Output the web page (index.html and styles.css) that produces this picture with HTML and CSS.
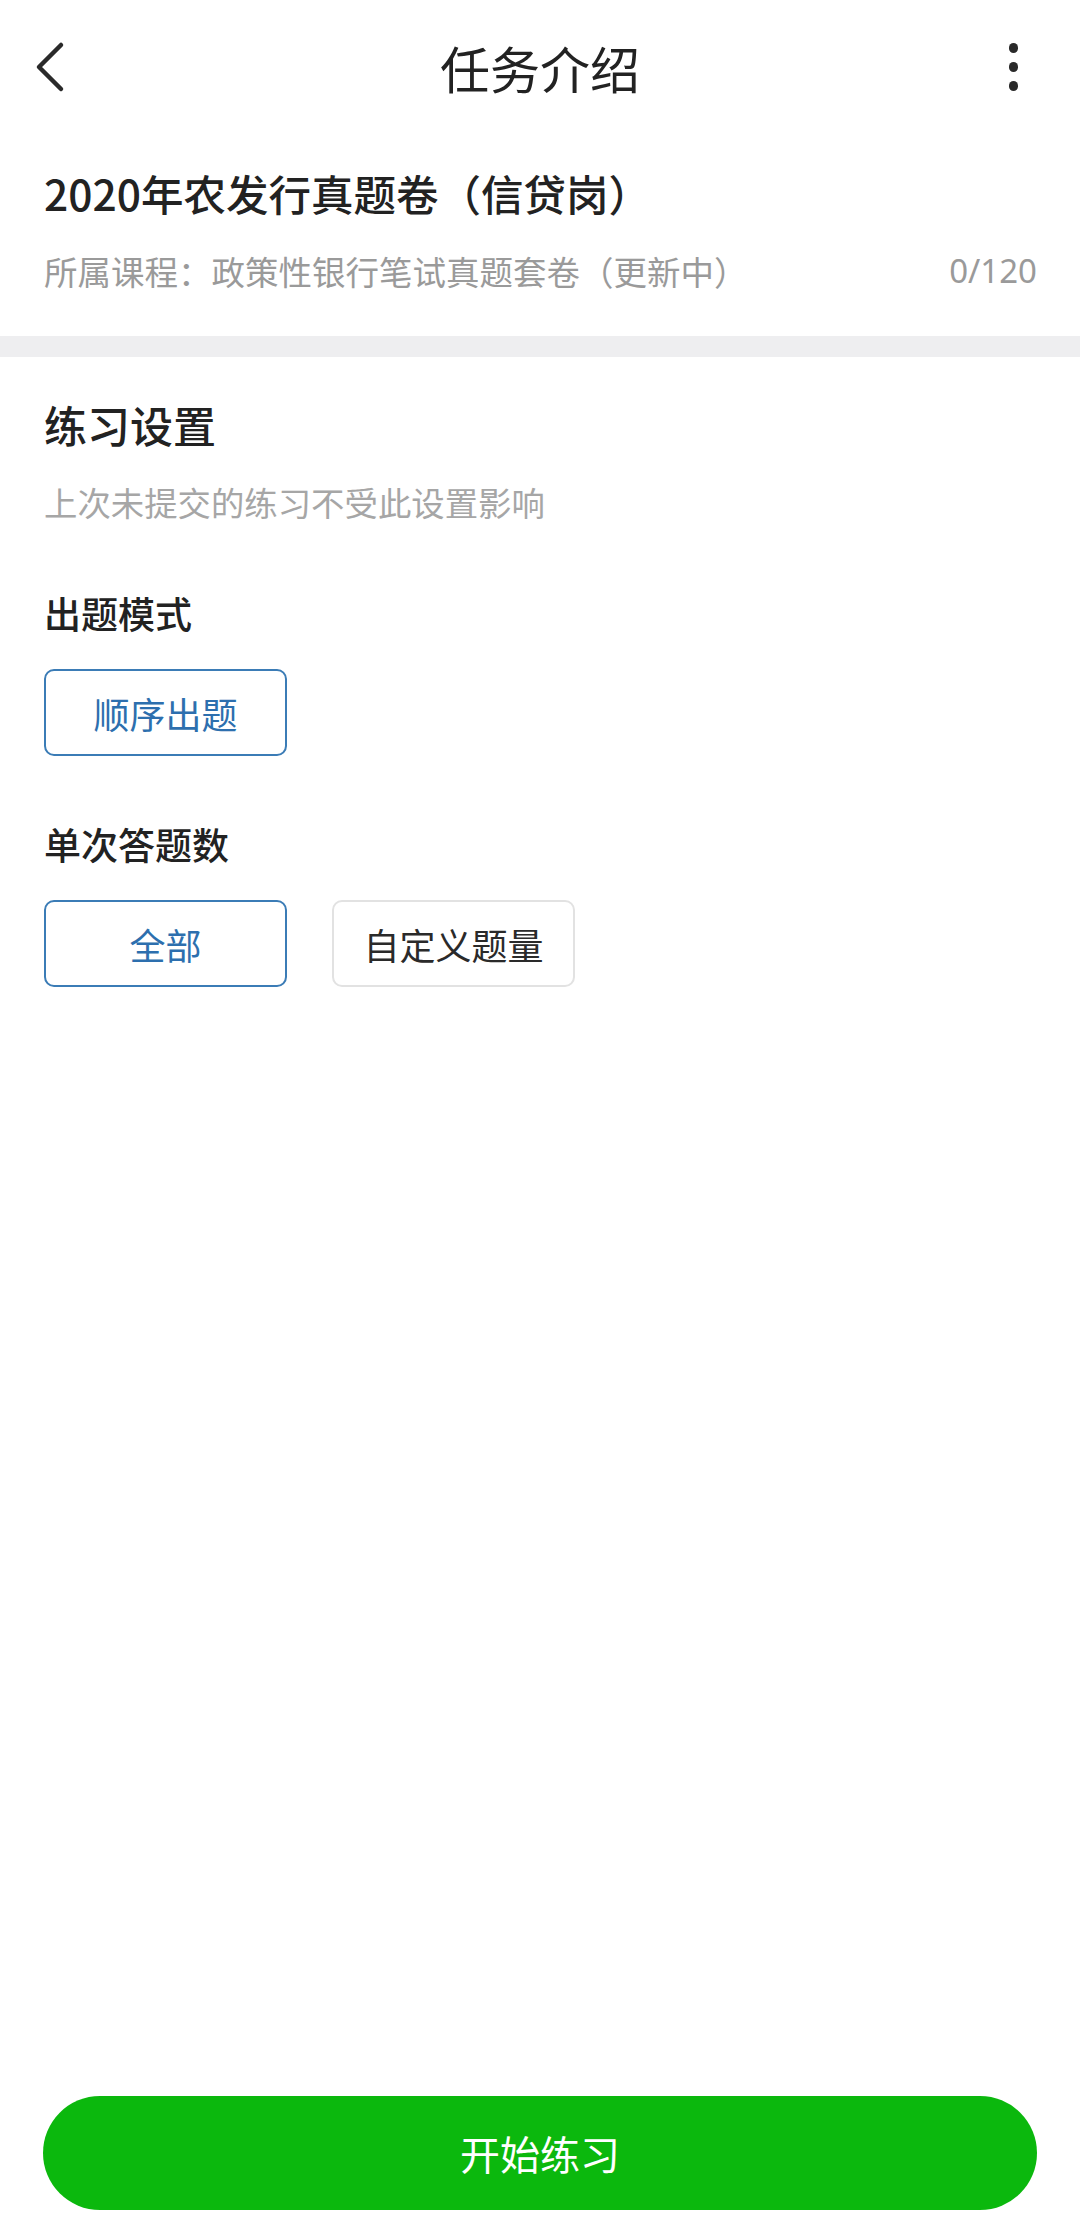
FILE: index.html
```html
<!DOCTYPE html>
<html lang="zh-CN">
<head>
<meta charset="utf-8">
<title>任务介绍</title>
<link rel="stylesheet" href="styles.css">
</head>
<body>
<div class="page">
  <header class="topbar">
    <svg class="back" width="40" height="60" viewBox="0 0 40 60">
      <polyline points="26,8 4,30 26,52" fill="none" stroke="#2a2a2a" stroke-width="4.5" stroke-linecap="round" stroke-linejoin="round"/>
    </svg>
    <h1 class="topbar-title">任务介绍</h1>
    <div class="more">
      <span class="dot"></span><span class="dot"></span><span class="dot"></span>
    </div>
  </header>

  <section class="info">
    <h2 class="info-title">2020年农发行真题卷（信贷岗）</h2>
    <div class="info-sub">
      <span>所属课程：政策性银行笔试真题套卷（更新中）</span>
      <span class="count">0/120</span>
    </div>
  </section>

  <div class="divider"></div>

  <section class="settings">
    <h3 class="settings-title">练习设置</h3>
    <p class="hint">上次未提交的练习不受此设置影响</p>

    <div class="group-label">出题模式</div>
    <div class="options">
      <button class="opt active">顺序出题</button>
    </div>

    <div class="group-label">单次答题数</div>
    <div class="options">
      <button class="opt active">全部</button>
      <button class="opt">自定义题量</button>
    </div>
  </section>

  <footer class="footer">
    <button class="start">开始练习</button>
  </footer>
</div>
</body>
</html>
```

FILE: styles.css
```css
* { box-sizing: border-box; }
html, body {
  margin: 0;
  padding: 0;
  background: #ffffff;
}
body {
  font-family: "Noto Sans CJK SC", "Noto Sans", sans-serif;
  color: #222222;
}
.page {
  width: 1080px;
  height: 2225px;
  display: flex;
  flex-direction: column;
}
.topbar {
  height: 134px;
  display: flex;
  align-items: center;
  justify-content: space-between;
  padding: 0 62px 0 35px;
  position: relative;
}
.back { display: block; }
.topbar-title {
  margin: 0;
  font-size: 50px;
  font-weight: 400;
  line-height: 60px;
  color: #222;
  position: absolute;
  left: 0;
  right: 0;
  text-align: center;
  pointer-events: none;
}
.more {
  display: flex;
  flex-direction: column;
  gap: 9.5px;
  align-items: center;
}
.dot {
  width: 9.5px;
  height: 9.5px;
  border-radius: 50%;
  background: #2a2a2a;
}
.info {
  padding: 29px 43px 42px 44px;
}
.info-title {
  margin: 0;
  font-size: 42.5px;
  font-weight: 500;
  line-height: 60px;
  color: #222;
}
.info-sub {
  margin-top: 25px;
  display: flex;
  justify-content: space-between;
  font-size: 33.5px;
  line-height: 46px;
  color: #9a9a9a;
}
.count { font-family: "Noto Sans", "Noto Sans CJK SC", sans-serif; font-size: 33px; }
.divider {
  height: 21px;
  background: #eeeef0;
}
.settings {
  padding: 37px 44px 0 44px;
}
.settings-title {
  margin: 0;
  font-size: 43px;
  font-weight: 500;
  line-height: 60px;
  color: #222;
}
.hint {
  margin: 25px 0 0 0;
  font-size: 33.4px;
  line-height: 46px;
  color: #a6a6a6;
}
.group-label {
  margin-top: 62px;
  font-size: 37px;
  font-weight: 500;
  line-height: 52px;
  color: #222;
}
.options {
  margin-top: 30px;
  display: flex;
  gap: 45px;
}
.opt {
  width: 243px;
  height: 87px;
  border: 2px solid #e2e2e2;
  border-radius: 10px;
  background: #fff;
  font-family: "Noto Sans CJK SC", sans-serif;
  font-size: 36px;
  color: #2a2a2a;
  padding: 0;
}
.opt.active {
  border-color: #3b7cb6;
  color: #2d6fae;
}
.footer {
  margin-top: auto;
  padding: 0 43px 15px 43px;
}
.start {
  width: 100%;
  height: 114px;
  border: none;
  border-radius: 57px;
  background: #0bb80d;
  color: #ffffff;
  font-family: "Noto Sans CJK SC", sans-serif;
  font-size: 40px;
  padding: 0;
}
```
